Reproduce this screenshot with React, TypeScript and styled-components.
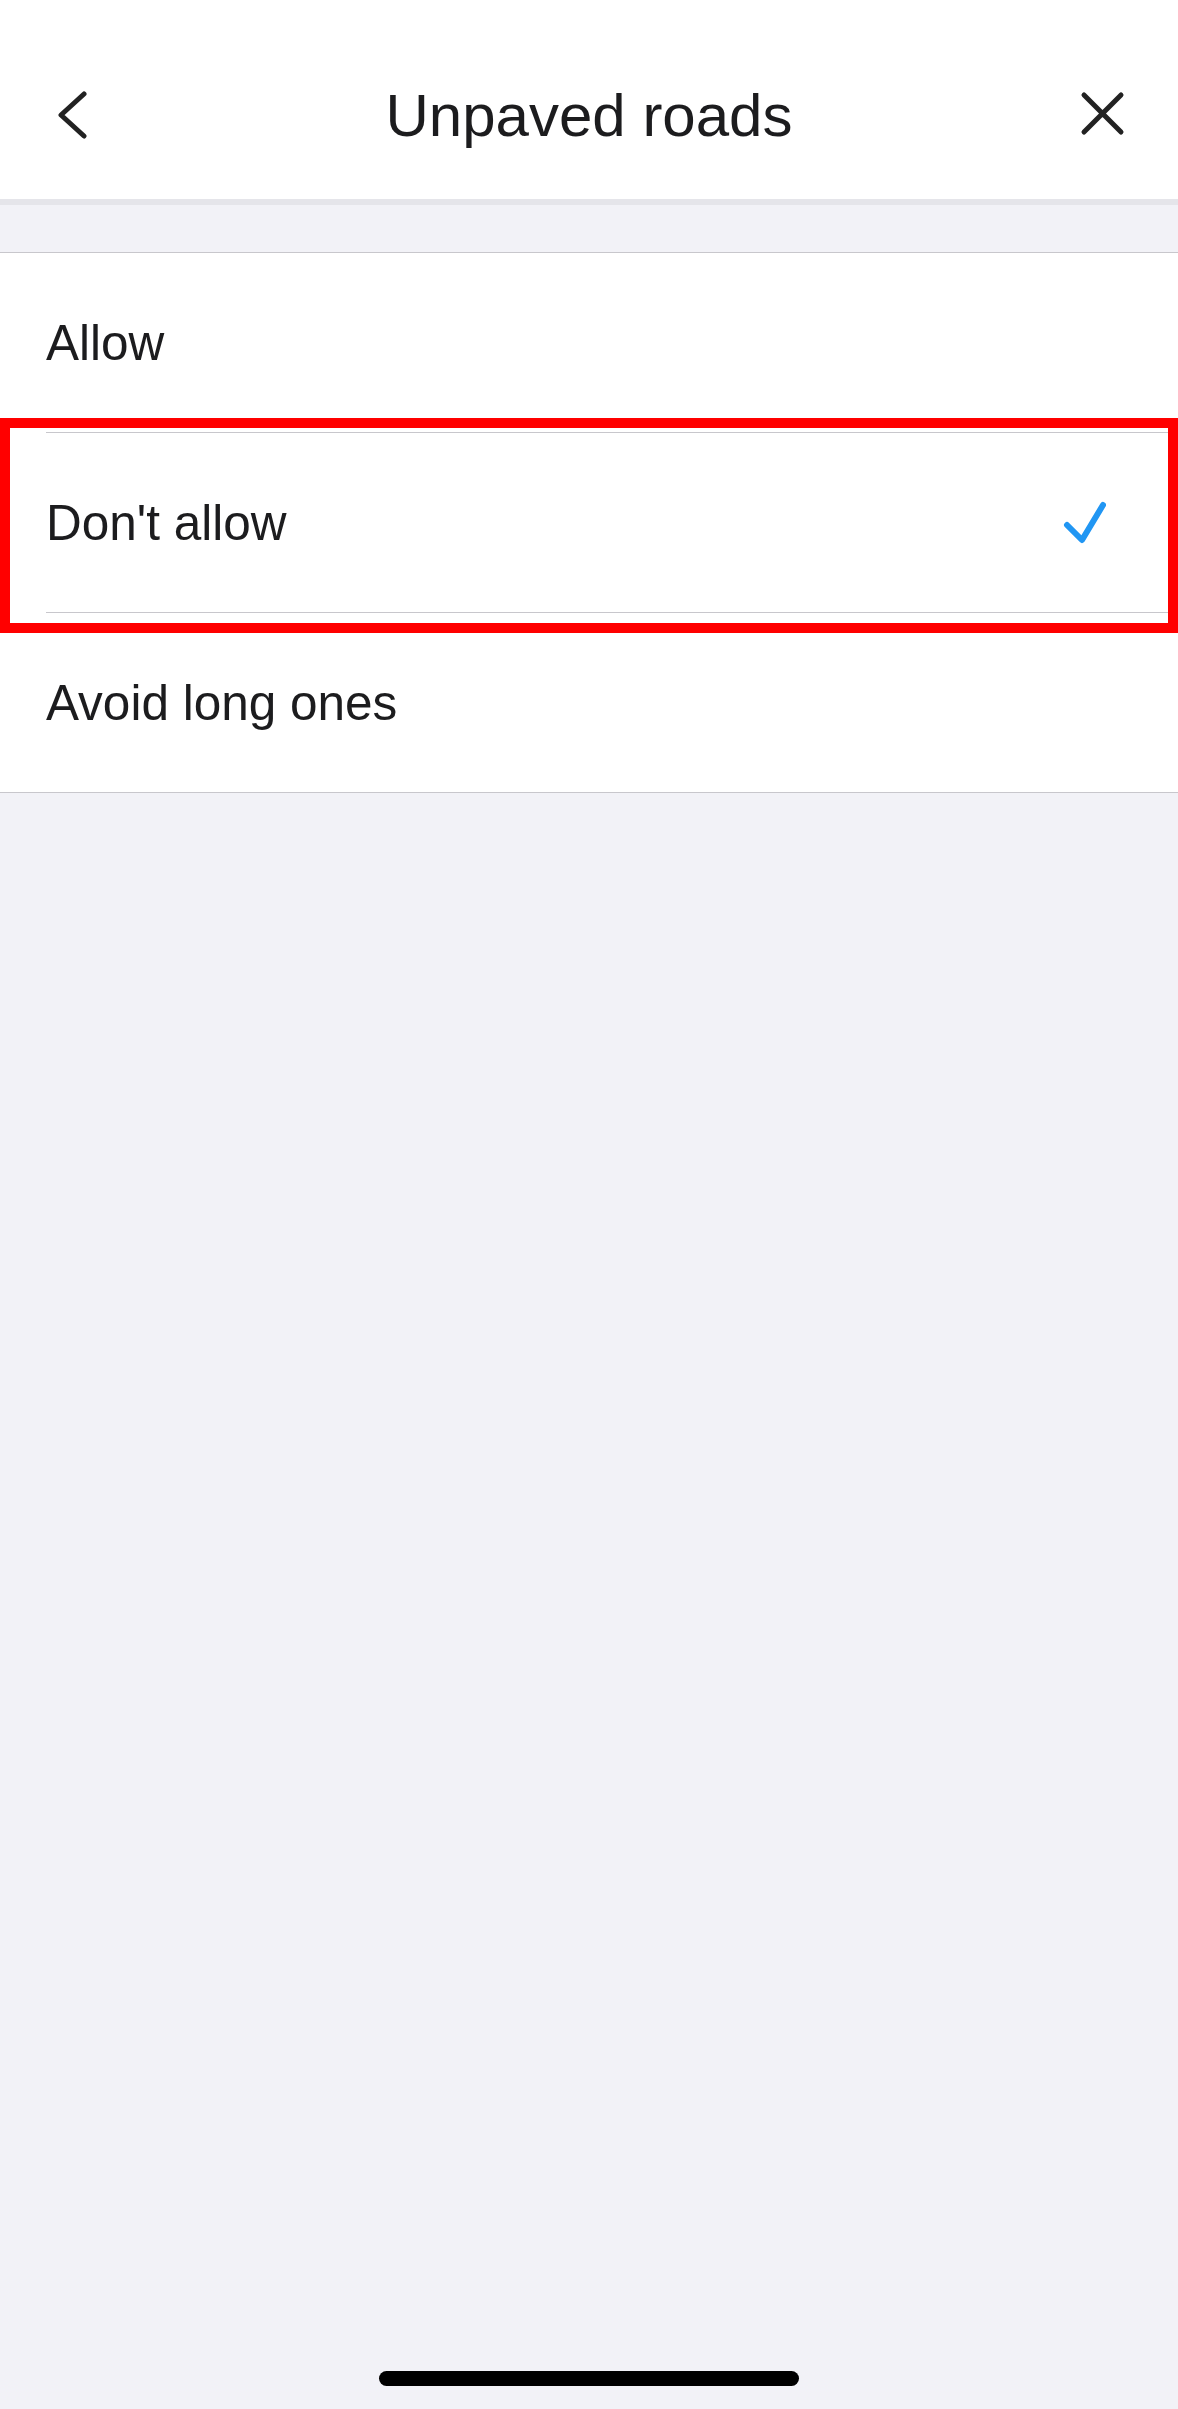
import styled, { createGlobalStyle } from "styled-components"

const GlobalStyle = createGlobalStyle`
  html, body {
    margin: 0;
    padding: 0;
    background: #f2f2f7;
    font-family: "Liberation Sans", Arial, sans-serif;
    color: #1c1c1e;
  }
`

type Option = {
  id: string
  label: string
}

const options: Option[] = [
  { id: "allow", label: "Allow" },
  { id: "dont", label: "Don't allow" },
  { id: "avoid", label: "Avoid long ones" },
]

const selectedId = "dont"

const Page = styled.div`
  min-height: 100vh;
  display: flex;
  flex-direction: column;
  background: #f2f2f7;
`

const Header = styled.header`
  height: 199px;
  background: #ffffff;
  border-bottom: 6px solid #e5e5ea;
  box-sizing: content-box;
`

const NavBar = styled.div`
  margin-top: 55px;
  height: 120px;
  display: grid;
  grid-template-columns: 1fr auto 1fr;
  align-items: center;
  padding: 0 50px;
`

const IconButton = styled.button<{ $align: "start" | "end" }>`
  justify-self: ${({ $align }) => $align};
  width: 48px;
  height: 48px;
  padding: 0;
  border: none;
  background: none;
  color: #222222;
  display: flex;
  align-items: center;
  justify-content: center;
`

const Title = styled.h1`
  margin: 0;
  font-size: 60px;
  font-weight: 400;
  color: #1c1c1e;
  letter-spacing: 0;
`

const Gap = styled.div`
  height: 47px;
`

const List = styled.ul`
  list-style: none;
  margin: 0;
  padding: 0;
  background: #ffffff;
  border-top: 1px solid #c8c7cc;
  border-bottom: 1px solid #c8c7cc;
`

const Row = styled.li`
  position: relative;
  padding-left: 46px;
`

const RowContent = styled.div<{ $last: boolean }>`
  height: 179px;
  display: flex;
  align-items: center;
  justify-content: space-between;
  padding-right: 72px;
  border-bottom: ${({ $last }) => ($last ? "none" : "1px solid #c8c7cc")};
`

const Label = styled.span`
  font-size: 49.5px;
  color: #1c1c1e;
`

const Highlight = styled.div`
  position: absolute;
  z-index: 1;
  top: -15px;
  bottom: -20px;
  left: 0;
  right: 0;
  border: 10px solid #ff0000;
  pointer-events: none;
`

const Filler = styled.div`
  flex: 1;
  display: flex;
  align-items: flex-end;
  justify-content: center;
  padding-bottom: 23px;
`

const HomeIndicator = styled.div`
  width: 420px;
  height: 15px;
  border-radius: 8px;
  background: #000000;
`

function BackIcon() {
  return (
    <svg width="48" height="48" viewBox="0 0 48 48" fill="none">
      <path
        d="M34 3 L11 24 L34 45"
        stroke="currentColor"
        strokeWidth="5"
        strokeLinecap="round"
        strokeLinejoin="round"
      />
    </svg>
  )
}

function CloseIcon() {
  return (
    <svg width="48" height="48" viewBox="0 0 48 48" fill="none">
      <path
        d="M4 4 L41 41 M41 4 L4 41"
        stroke="currentColor"
        strokeWidth="5"
        strokeLinecap="round"
      />
    </svg>
  )
}

function CheckIcon() {
  return (
    <svg width="44" height="44" viewBox="0 0 44 44" fill="none">
      <path
        d="M5 24 L20 39 L41 4"
        stroke="#2196f3"
        strokeWidth="6"
        strokeLinecap="round"
        strokeLinejoin="round"
      />
    </svg>
  )
}

export default function App() {
  return (
    <Page>
      <GlobalStyle />
      <Header>
        <NavBar>
          <IconButton $align="start" aria-label="Back">
            <BackIcon />
          </IconButton>
          <Title>Unpaved roads</Title>
          <IconButton $align="end" aria-label="Close">
            <CloseIcon />
          </IconButton>
        </NavBar>
      </Header>
      <Gap />
      <List>
        {options.map((option, index) => (
          <Row key={option.id}>
            <RowContent $last={index === options.length - 1}>
              <Label>{option.label}</Label>
              {option.id === selectedId && <CheckIcon />}
            </RowContent>
            {option.id === selectedId && <Highlight />}
          </Row>
        ))}
      </List>
      <Filler>
        <HomeIndicator />
      </Filler>
    </Page>
  )
}
